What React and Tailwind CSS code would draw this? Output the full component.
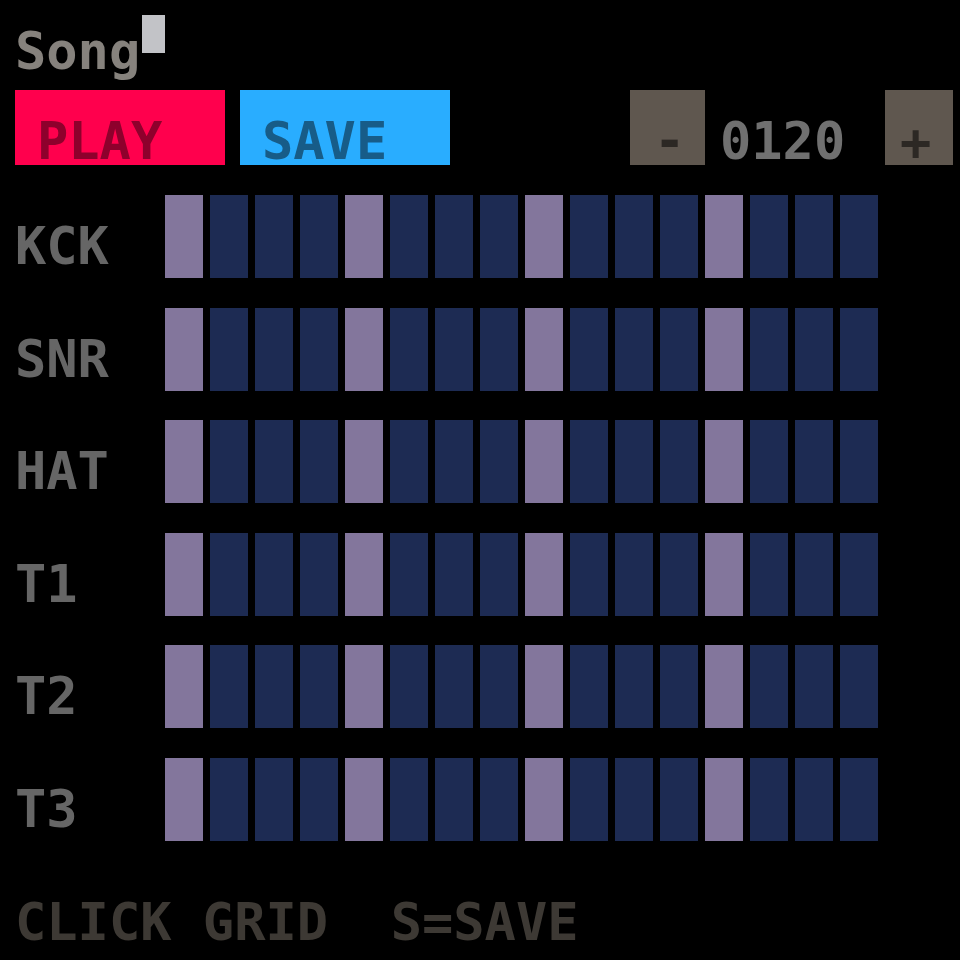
import React from "react";

const TRACKS = ["KCK", "SNR", "HAT", "T1", "T2", "T3"];
const STEPS = Array.from({ length: 16 }, (_, i) => i);

const mono = { fontFamily: '"DejaVu Sans Mono", "Liberation Mono", monospace' };

function Step({ on }) {
  return (
    <div className={on ? "w-[38px] h-[83px] bg-[#83769c]" : "w-[38px] h-[83px] bg-[#1d2b53]"} />
  );
}

export default function App() {
  return (
    <div
      className="w-[960px] h-[960px] bg-black overflow-hidden flex flex-col text-[52px] leading-[52px] font-bold"
      style={mono}
    >
      {/* title + text cursor */}
      <div className="h-[90px] flex items-start pt-[15px] pl-[15px]">
        <span className="mt-[10px] text-[#86827d]">Song</span>
        <div className="w-[23px] h-[38px] bg-[#c2c3c7] ml-[2px]" />
      </div>

      {/* transport row */}
      <div className="h-[75px] flex pl-[15px]">
        <div className="w-[210px] h-[75px] bg-[#ff004d] pl-[22px] pt-[25px] text-[#8e002c]">PLAY</div>
        <div className="w-[210px] h-[75px] bg-[#29adff] ml-[15px] pl-[22px] pt-[25px] text-[#175c88]">SAVE</div>
        <div className="w-[75px] h-[75px] bg-[#5f574f] ml-[180px] pl-[24px] pt-[24px] text-[#2c2824]">-</div>
        <div className="w-[180px] pl-[15px] pt-[25px] text-[#707070]">0120</div>
        <div className="w-[68px] h-[75px] bg-[#5f574f] pl-[15px] pt-[26px] text-[#2c2824]">+</div>
      </div>

      {/* step grid */}
      <div className="mt-[30px] flex flex-col gap-[29.5px]">
        {TRACKS.map((t) => (
          <div key={t} className="h-[83px] flex">
            <div className="w-[165px] pl-[15px] pt-[25px] text-[#666666]">{t}</div>
            <div className="flex gap-[7px]">
              {STEPS.map((s) => (
                <Step key={s} on={s % 4 === 0} />
              ))}
            </div>
          </div>
        ))}
      </div>

      {/* help line */}
      <div className="mt-[55px] pl-[15px] text-[#3d3934] whitespace-pre">CLICK GRID  S=SAVE</div>
    </div>
  );
}
